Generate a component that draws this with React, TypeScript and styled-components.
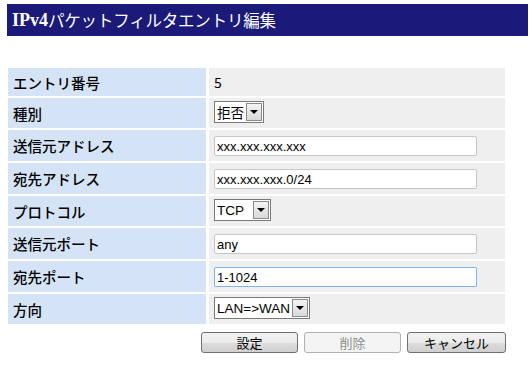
import React from 'react';
import styled, { createGlobalStyle } from 'styled-components';

const GlobalStyle = createGlobalStyle`
	body {
		margin: 0;
		background: #ffffff;
		font-family: "Noto Sans CJK JP", sans-serif;
	}
`;

type Field =
	| { label: string; kind: 'text'; value: string }
	| { label: string; kind: 'select'; value: string; width: number }
	| { label: string; kind: 'input'; value: string; focused?: boolean };

const FIELDS: Field[] = [
	{ label: 'エントリ番号', kind: 'text', value: '5' },
	{ label: '種別', kind: 'select', value: '拒否', width: 50 },
	{ label: '送信元アドレス', kind: 'input', value: 'xxx.xxx.xxx.xxx' },
	{ label: '宛先アドレス', kind: 'input', value: 'xxx.xxx.xxx.0/24' },
	{ label: 'プロトコル', kind: 'select', value: 'TCP', width: 57 },
	{ label: '送信元ポート', kind: 'input', value: 'any' },
	{ label: '宛先ポート', kind: 'input', value: '1-1024', focused: true },
	{ label: '方向', kind: 'select', value: 'LAN=>WAN', width: 96 },
];

const Select = ({ value, width }: { value: string; width: number }) => (
	<SelectBox style={{ width }}>
		<SelectText>{value}</SelectText>
		<ArrowButton>
			<Arrow />
		</ArrowButton>
	</SelectBox>
);

const App = () => {
	return (
		<Page>
			<GlobalStyle />
			<Title>
				<Latin>IPv4</Latin>パケットフィルタエントリ編集
			</Title>
			<Form>
				<Grid>
					{FIELDS.map(field => (
						<React.Fragment key={field.label}>
							<LabelCell>{field.label}</LabelCell>
							<ValueCell>
								{field.kind === 'text' && <PlainValue>{field.value}</PlainValue>}
								{field.kind === 'select' && <Select value={field.value} width={field.width} />}
								{field.kind === 'input' && (
									<TextInput readOnly value={field.value} $focused={field.focused} />
								)}
							</ValueCell>
						</React.Fragment>
					))}
				</Grid>
				<ButtonBar>
					<Button $width={97}>設定</Button>
					<Button $width={97} disabled>削除</Button>
					<Button $width={99}>キャンセル</Button>
				</ButtonBar>
			</Form>
		</Page>
	);
};

const Page = styled.div`
	padding: 4px 1px 0 7px;
`;

const Title = styled.h1`
	margin: 0;
	height: 32px;
	display: flex;
	align-items: center;
	padding-left: 5px;
	background-color: #1b1a78;
	color: #ffffff;
	font-family: "Noto Sans CJK JP", sans-serif;
	font-size: 16.5px;
	font-weight: normal;
	letter-spacing: -0.2px;
`;

const Latin = styled.span`
	font-family: "Liberation Serif", serif;
	font-weight: bold;
	font-size: 18px;
	letter-spacing: 0;
`;

const Form = styled.div`
	margin: 32px 0 0 1px;
	width: 498px;
`;

const Grid = styled.div`
	display: grid;
	grid-template-columns: 198px 296px;
	grid-template-rows: 28px 30px 31px 31px 30px 31px 31px 30px;
	column-gap: 3px;
	row-gap: 2px;
`;

const LabelCell = styled.div`
	display: flex;
	align-items: center;
	padding-left: 5px;
	background-color: #d5e3f6;
	color: #000000;
	font-size: 14.5px;
	font-weight: 500;
`;

const ValueCell = styled.div`
	display: flex;
	align-items: center;
	padding-left: 5px;
	background-color: #efefef;
`;

const PlainValue = styled.span`
	font-size: 14px;
	color: #000000;
`;

const TextInput = styled.input<{ $focused?: boolean }>`
	box-sizing: border-box;
	width: 263px;
	height: 20px;
	margin: 1px 0 0;
	padding: 0 2px;
	border: 1px solid ${props => (props.$focused ? '#7eb4ea' : '#c3c6ca')};
	border-radius: 2px;
	background: #ffffff;
	font-family: "Liberation Sans", Arial, sans-serif;
	font-size: 13px;
	color: #000000;
	outline: none;
`;

const SelectBox = styled.div`
	box-sizing: border-box;
	height: 22px;
	margin-top: -2px;
	display: flex;
	align-items: center;
	justify-content: space-between;
	border: 1px solid #7a7a7a;
	background: #ffffff;
`;

const SelectText = styled.span`
	padding-left: 2px;
	font-family: "Liberation Sans", "Noto Sans CJK JP", sans-serif;
	font-size: 13.5px;
	color: #000000;
	white-space: nowrap;
`;

const ArrowButton = styled.div`
	box-sizing: border-box;
	width: 16px;
	height: 18px;
	margin-right: 1px;
	display: flex;
	align-items: center;
	justify-content: center;
	border: 1px solid #8a8a8a;
	background: linear-gradient(#f4f4f4, #d9d9d9);
`;

const Arrow = styled.div`
	width: 0;
	height: 0;
	border-left: 4px solid transparent;
	border-right: 4px solid transparent;
	border-top: 4px solid #000000;
`;

const ButtonBar = styled.div`
	display: flex;
	justify-content: flex-end;
	gap: 6px;
	margin-top: 8px;
`;

const Button = styled.button<{ $width: number }>`
	box-sizing: border-box;
	width: ${props => props.$width}px;
	height: 21px;
	padding: 0;
	border: 1px solid #707070;
	border-radius: 3px;
	background: linear-gradient(#f2f2f2 0%, #ebebeb 50%, #dddddd 51%, #cfcfcf 100%);
	font-family: "Noto Sans CJK JP", sans-serif;
	font-size: 13px;
	line-height: 19px;
	color: #000000;

	&:disabled {
		border-color: #adb2b5;
		background: #f4f4f4;
		color: #8d8d8d;
	}
`;

export default App;
